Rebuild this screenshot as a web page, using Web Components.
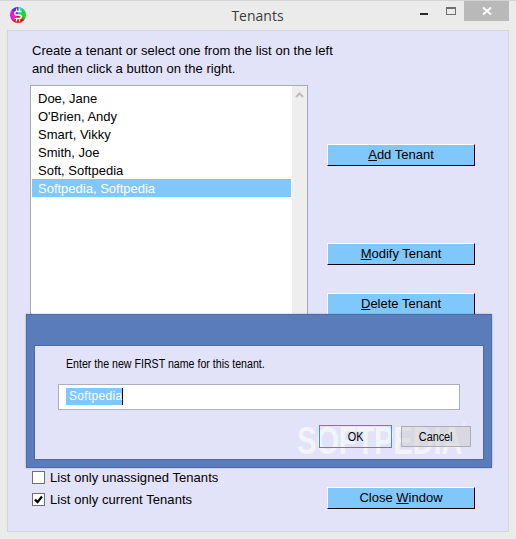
<!DOCTYPE html>
<html>
<head>
<meta charset="utf-8">
<title>Tenants</title>
<style>
  html, body { margin: 0; padding: 0; background: #ebebeb; }
</style>
</head>
<body>
<tn-window>
  <tn-titlebar slot="title">Tenants</tn-titlebar>
  <tn-intro slot="intro">Create a tenant or select one from the list on the left<br>and then click a button on the right.</tn-intro>
  <tn-listbox slot="list">
    <tn-item>Doe, Jane</tn-item>
    <tn-item>O'Brien, Andy</tn-item>
    <tn-item>Smart, Vikky</tn-item>
    <tn-item>Smith, Joe</tn-item>
    <tn-item>Soft, Softpedia</tn-item>
    <tn-item selected>Softpedia, Softpedia</tn-item>
  </tn-listbox>
  <tn-check slot="checks">List only unassigned Tenants</tn-check>
  <tn-check slot="checks" checked>List only current Tenants</tn-check>
  <tn-button slot="add"><u>A</u>dd Tenant</tn-button>
  <tn-button slot="modify"><u>M</u>odify Tenant</tn-button>
  <tn-button slot="delete"><u>D</u>elete Tenant</tn-button>
  <tn-button slot="close">Close <u>W</u>indow</tn-button>
  <tn-dialog slot="dialog" prompt="Enter the new FIRST name for this tenant." value="Softpedia"></tn-dialog>
</tn-window>

<script>
const FONT = '"Liberation Sans", Arial, sans-serif';

class TnWindow extends HTMLElement {
  connectedCallback() {
    this.attachShadow({ mode: 'open' });
    this.shadowRoot.innerHTML = `
      <style>
        :host {
          display: block;
          position: relative;
          width: 516px;
          height: 539px;
          box-sizing: border-box;
          background: #ebebeb;
          border-top: 1px solid #d4d4d4;
          overflow: hidden;
          font-family: ${FONT};
          color: #000;
        }
        .panel {
          box-sizing: border-box;
          width: 502px;
          height: 502px;
          margin: 0 0 0 7px;
          background: #e2e2f8;
          border: 1px solid #d6d6d6;
          padding: 0 33px 0 22px;
          display: grid;
          grid-template-columns: 278px 148px;
          column-gap: 19px;
        }
        .left { display: flex; flex-direction: column; }
        .right { display: flex; flex-direction: column; padding-top: 113px; padding-bottom: 22px; }
        .checks { display: flex; flex-direction: column; gap: 9px; margin: 5px 0 0 2px; }
        ::slotted([slot="modify"]) { margin-top: 77px; }
        ::slotted([slot="delete"]) { margin-top: 28px; }
        ::slotted([slot="close"]) { margin-top: auto; }
        ::slotted([slot="dialog"]) { position: absolute; left: 26px; top: 313px; }
      </style>
      <slot name="title"></slot>
      <div class="panel">
        <div class="left">
          <slot name="intro"></slot>
          <slot name="list"></slot>
          <div class="checks"><slot name="checks"></slot></div>
        </div>
        <div class="right">
          <slot name="add"></slot>
          <slot name="modify"></slot>
          <slot name="delete"></slot>
          <slot name="close"></slot>
        </div>
      </div>
      <slot name="dialog"></slot>
    `;
  }
}

class TnTitlebar extends HTMLElement {
  connectedCallback() {
    this.attachShadow({ mode: 'open' });
    this.shadowRoot.innerHTML = `
      <style>
        :host {
          display: grid;
          grid-template-columns: 1fr auto 1fr;
          align-items: start;
          height: 29px;
        }
        .logo {
          margin: 6px 0 0 10px;
          width: 16px;
          height: 16px;
          border-radius: 50%;
          background: conic-gradient(#18c8d8 0 40deg, #18d830 40deg 110deg, #e01818 140deg 215deg, #e818d8 240deg 300deg, #5020e8 320deg 360deg);
          display: block;
        }
        .logo svg { display: block; }
        .name {
          font: 14px/30px "Open Sans", "Noto Sans", sans-serif;
          color: #3c3c3c;
          padding-right: 1px;
        }
        .controls { display: flex; justify-content: flex-end; }
        .min { width: 8px; height: 2px; background: #2a2a2a; margin: 12px 18px 0 0; }
        .max { box-sizing: border-box; width: 10px; height: 8px; border: 1px solid #6e6e6e; border-top-width: 2px; margin: 6px 8px 0 0; }
        .close {
          width: 45px;
          height: 20px;
          background: #b9b9b9;
          margin-right: 7px;
          display: flex;
          align-items: center;
          justify-content: center;
        }
      </style>
      <div><div class="logo">
        <svg width="16" height="16" viewBox="0 0 16 16" fill="none" stroke="#fff" stroke-width="1.5">
          <path d="M11.5 4.5H6.5a1.7 1.7 0 0 0 0 3.5h3a1.7 1.7 0 0 1 0 3.5H4.5"/>
          <path d="M6.5 1.5v3M9.5 1.5v3M6.5 11.5v3M9.5 11.5v3" stroke-width="1.2"/>
        </svg>
      </div></div>
      <div class="name"><slot></slot></div>
      <div class="controls">
        <div class="min"></div>
        <div class="max"></div>
        <div class="close">
          <svg width="10" height="10" viewBox="0 0 10 10" stroke="#fff" stroke-width="1.9"><path d="M1 1.5L9 8.5M9 1.5L1 8.5"/></svg>
        </div>
      </div>
    `;
  }
}

class TnIntro extends HTMLElement {
  connectedCallback() {
    this.attachShadow({ mode: 'open' });
    this.shadowRoot.innerHTML = `
      <style>
        :host {
          display: block;
          font-size: 13px;
          line-height: 18px;
          letter-spacing: 0.03px;
          padding: 11px 0 7px 2px;
          white-space: nowrap;
        }
      </style>
      <slot></slot>
    `;
  }
}

class TnListbox extends HTMLElement {
  connectedCallback() {
    this.attachShadow({ mode: 'open' });
    this.shadowRoot.innerHTML = `
      <style>
        :host {
          display: grid;
          grid-template-columns: 1fr 15px;
          box-sizing: border-box;
          height: 381px;
          background: #fff;
          border: 1px solid #a9a9b4;
        }
        .rows { padding: 3px 1px 0 1px; display: flex; flex-direction: column; }
        .bar { background: #eeeeee; display: flex; justify-content: center; padding-top: 6px; align-items: flex-start; }
      </style>
      <div class="rows"><slot></slot></div>
      <div class="bar">
        <svg width="9" height="6" viewBox="0 0 9 6" fill="none" stroke="#bcbcbc" stroke-width="2"><path d="M1 5L4.5 1.5L8 5"/></svg>
      </div>
    `;
  }
}

class TnItem extends HTMLElement {
  connectedCallback() {
    this.attachShadow({ mode: 'open' });
    this.shadowRoot.innerHTML = `
      <style>
        :host {
          display: block;
          height: 18px;
          font-size: 13px;
          line-height: 20px;
          padding-left: 6px;
          white-space: nowrap;
        }
        :host([selected]) { background: #80c8fb; color: #fff; }
      </style>
      <slot></slot>
    `;
  }
}

class TnCheck extends HTMLElement {
  connectedCallback() {
    this.attachShadow({ mode: 'open' });
    this.shadowRoot.innerHTML = `
      <style>
        :host {
          display: flex;
          align-items: center;
          gap: 5px;
          height: 13px;
          font-size: 13px;
          letter-spacing: 0.06px;
          white-space: nowrap;
        }
        .box {
          box-sizing: border-box;
          flex: none;
          width: 13px;
          height: 13px;
          background: #fff;
          border: 1px solid #707070;
        }
        svg { display: block; }
        :host(:not([checked])) svg { display: none; }
      </style>
      <div class="box">
        <svg width="11" height="11" viewBox="0 0 11 11" fill="none" stroke="#000" stroke-width="2.2"><path d="M2 5.5L4.5 8L9 2.5"/></svg>
      </div>
      <span><slot></slot></span>
    `;
  }
}

class TnButton extends HTMLElement {
  connectedCallback() {
    this.attachShadow({ mode: 'open' });
    this.shadowRoot.innerHTML = `
      <style>
        :host {
          display: flex;
          align-items: center;
          justify-content: center;
          box-sizing: border-box;
          width: 148px;
          height: 22px;
          padding-bottom: 2px;
          background: #80c8fb;
          border: 1px solid;
          border-color: #fff #000 #000 #fff;
          font-size: 13px;
          white-space: nowrap;
        }
      </style>
      <span><slot></slot></span>
    `;
  }
}

class TnDialog extends HTMLElement {
  connectedCallback() {
    this.attachShadow({ mode: 'open' });
    const prompt = this.getAttribute('prompt');
    const value = this.getAttribute('value');
    this.shadowRoot.innerHTML = `
      <style>
        :host {
          display: block;
          box-sizing: border-box;
          width: 466px;
          height: 154px;
          background: #5a7cbb;
          border: 1px solid #4b6aa6;
          padding: 30px 7px 7px 7px;
          box-shadow: 0 0 2px rgba(0, 0, 0, 0.25);
          font-family: ${FONT};
        }
        .inner {
          box-sizing: border-box;
          height: 115px;
          background: #e2e2f8;
          border: 1px solid #4b6aa6;
          padding: 10px 12px 0 23px;
          display: flex;
          flex-direction: column;
        }
        .prompt {
          font-size: 12px;
          line-height: 16px;
          padding-left: 8px;
          white-space: nowrap;
        }
        .prompt span { display: inline-block; transform: scaleX(0.885); transform-origin: left center; }
        .input {
          box-sizing: border-box;
          width: 402px;
          height: 26px;
          margin-top: 12px;
          background: #fff;
          border: 1px solid #aeaebb;
          padding: 3px 0 0 7px;
          display: flex;
          align-items: flex-start;
        }
        .sel {
          background: #80c8fb;
          color: #fff;
          font-size: 12px;
          line-height: 17px;
          letter-spacing: 0.3px;
          padding: 0 0 0 3px;
          border-right: 1px solid #000;
        }
        .actions {
          position: relative;
          z-index: 1;
          display: flex;
          justify-content: flex-end;
          align-items: center;
          gap: 9px;
          margin-top: 15px;
          font-size: 12px;
        }
        .ok, .cancel {
          box-sizing: border-box;
          display: flex;
          align-items: center;
          justify-content: center;
        }
        .ok span, .cancel span { display: inline-block; transform: scaleX(0.9); }
        .ok { width: 73px; height: 23px; border: 1px solid #3f8fe0; }
        .cancel { width: 70px; height: 21px; border: 1px solid #adadad; background: rgba(205, 205, 205, 0.5); }
        .mark {
          position: absolute;
          left: 270px;
          top: 91px;
          font: bold 39px/40px ${FONT};
          letter-spacing: -0.5px;
          color: rgba(255, 255, 255, 0.62);
          white-space: nowrap;
          transform: scaleX(0.755);
          transform-origin: left center;
          pointer-events: none;
        }
        .mark sup { font-size: 8px; font-weight: normal; vertical-align: 26px; }
      </style>
      <div class="inner">
        <div class="prompt"><span>${prompt}</span></div>
        <div class="input"><span class="sel">${value}</span></div>
        <div class="mark">SOFTPEDIA<sup>®</sup></div>
        <div class="actions">
          <div class="ok"><span>OK</span></div>
          <div class="cancel"><span>Cancel</span></div>
        </div>
      </div>
    `;
  }
}

customElements.define('tn-window', TnWindow);
customElements.define('tn-titlebar', TnTitlebar);
customElements.define('tn-intro', TnIntro);
customElements.define('tn-listbox', TnListbox);
customElements.define('tn-item', TnItem);
customElements.define('tn-check', TnCheck);
customElements.define('tn-button', TnButton);
customElements.define('tn-dialog', TnDialog);
</script>
</body>
</html>
